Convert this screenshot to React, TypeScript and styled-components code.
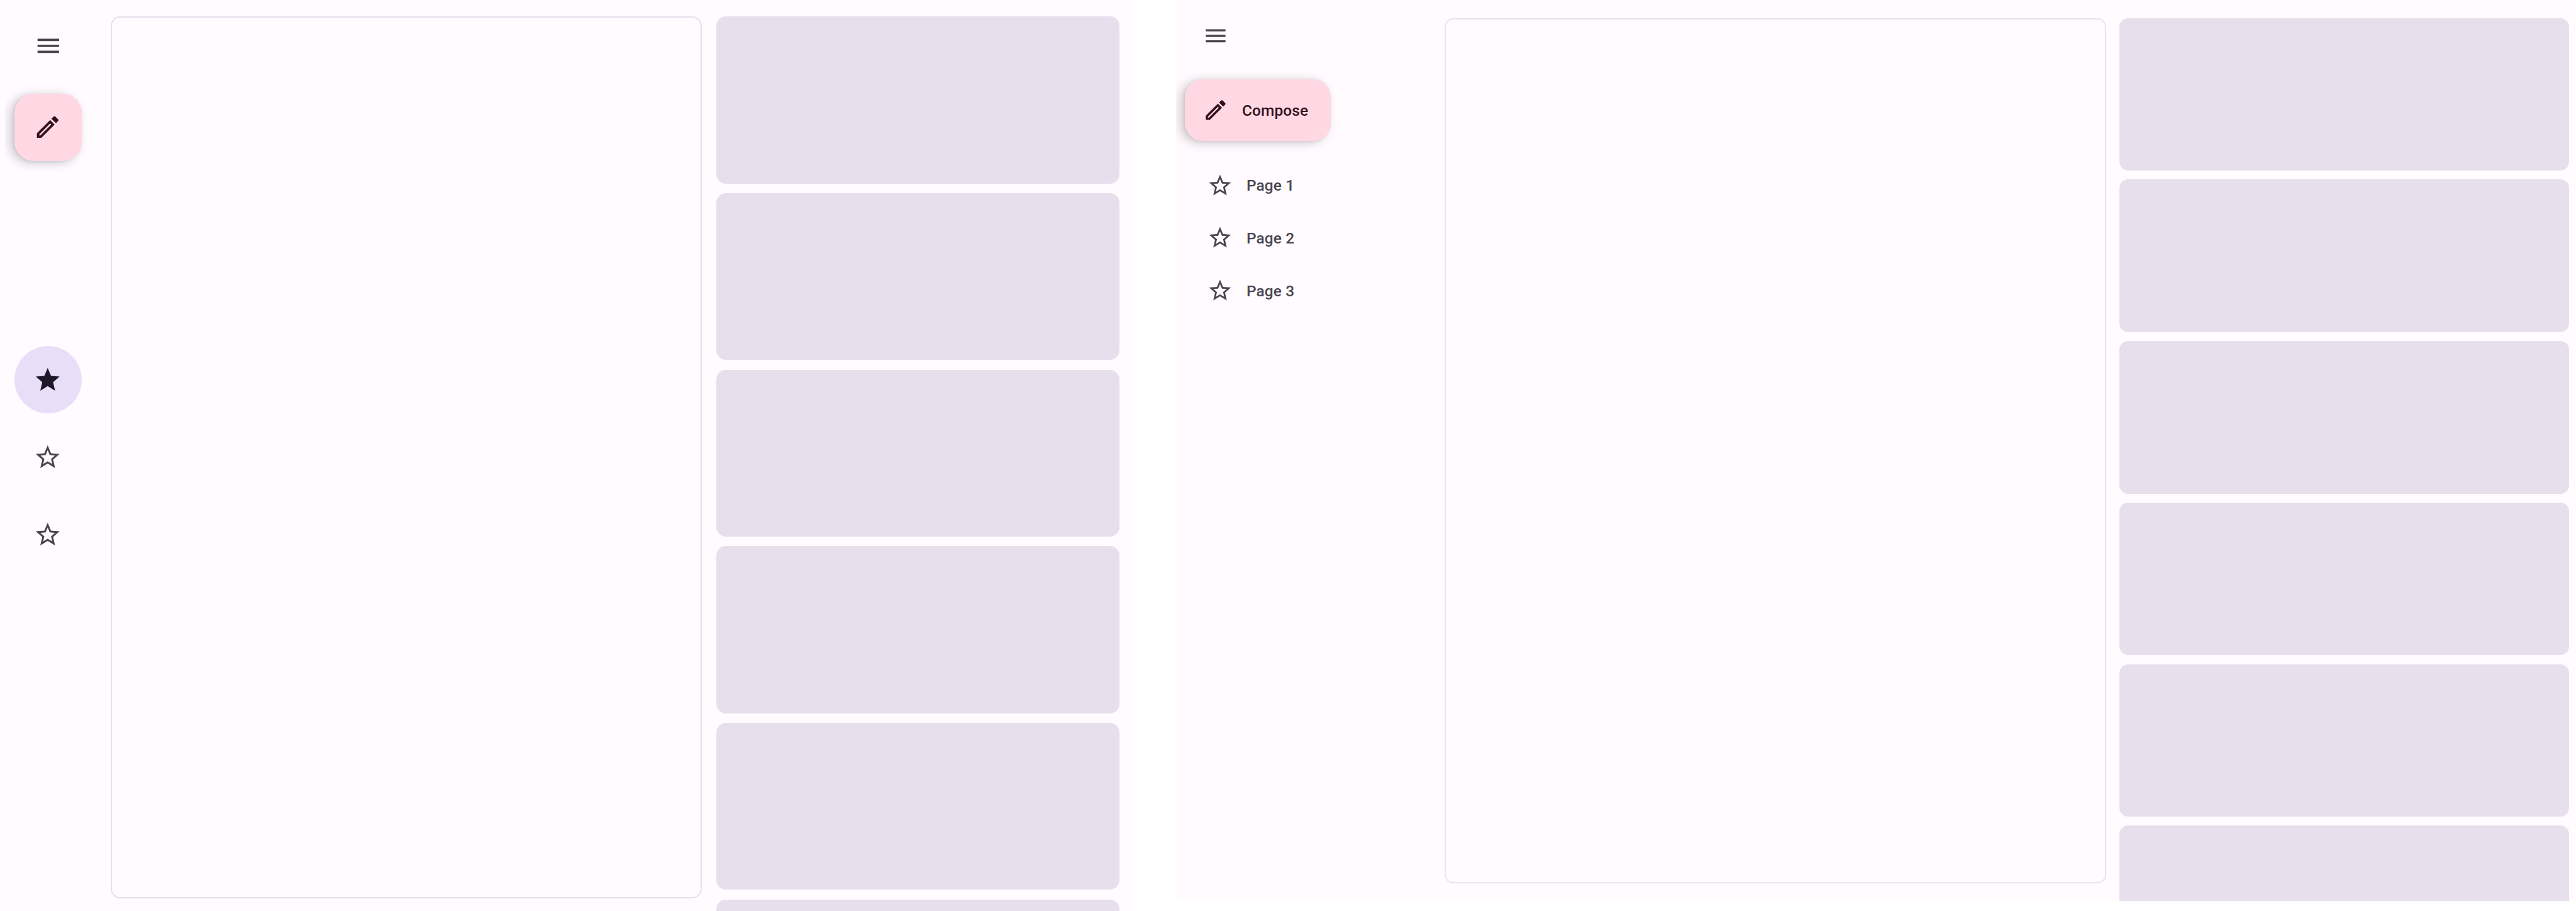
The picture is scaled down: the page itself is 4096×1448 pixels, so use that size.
import React from "react";
import styled, { createGlobalStyle, css } from "styled-components";

// Design units of the artboard (5267 wide) converted to CSS pixels.
const u = (n: number) => `${((n * 4096) / 5267).toFixed(3)}px`;

const color = {
  surface: "#fffbff",
  surfaceVariant: "#e7e0ec",
  outline: "#e7dfec",
  outlineThin: "#e9e3ef",
  secondary: "#e8def8",
  tertiary: "#ffd8e4",
  onTertiary: "#31101d",
  onSecondary: "#1d192b",
  onSurface: "#49454f",
};

const GlobalStyle = createGlobalStyle`
  *, *::before, *::after { box-sizing: border-box; }
  html, body { margin: 0; padding: 0; background: #ffffff; }
  body { font-family: Roboto, "Noto Sans", sans-serif; overflow: hidden; }
`;

const Board = styled.div`
  display: flex;
  align-items: flex-start;
  gap: ${u(86)};
  width: 4096px;
  height: 1448px;
  overflow: hidden;
`;

const Screen = styled.main<{ $width: number; $height: number }>`
  display: flex;
  flex: none;
  align-items: flex-start;
  width: ${(p) => u(p.$width)};
  height: ${(p) => u(p.$height)};
  background: ${color.surface};
  overflow: hidden;
`;

const Rail = styled.nav<{ $width: number; $top: number; $left: number }>`
  display: flex;
  flex: none;
  flex-direction: column;
  align-items: flex-start;
  width: ${(p) => u(p.$width)};
  padding: ${(p) => u(p.$top)} 0 0 ${(p) => u(p.$left)};
`;

const Icon = styled.svg<{ $size: number }>`
  display: block;
  flex: none;
  width: ${(p) => u(p.$size)};
  height: ${(p) => u(p.$size)};
  fill: currentColor;
`;

const MenuButton = styled.button<{ $indent: number }>`
  display: flex;
  margin: 0 0 0 ${(p) => u(p.$indent)};
  padding: 0;
  border: 0;
  background: none;
  color: ${color.onSurface};
`;

const Fab = styled.button<{ $compact?: boolean }>`
  display: flex;
  align-items: center;
  border: 0;
  background: ${color.tertiary};
  color: ${color.onTertiary};
  font-family: inherit;
  box-shadow: -7px 3px 17px rgba(0, 0, 0, 0.2), -1px 1px 4px rgba(0, 0, 0, 0.08);
  ${(p) =>
    p.$compact
      ? css`
          justify-content: center;
          width: ${u(137.5)};
          height: ${u(138)};
          margin: ${u(68.2)} 0 0;
          padding: 0;
          border-radius: ${u(39)};
          clip-path: inset(-40px -40px -40px -15px);
        `
      : css`
          gap: ${u(26.9)};
          width: ${u(298)};
          height: ${u(125.6)};
          margin: ${u(62.8)} 0 0;
          padding: 0 0 0 ${u(35.9)};
          border-radius: ${u(35.8)};
        `}
`;

const Label = styled.span`
  padding-top: ${u(2.4)};
  font-size: ${u(31.36)};
  font-weight: 500;
  line-height: ${u(44.8)};
  letter-spacing: ${u(0.224)};
  white-space: nowrap;
`;

const RailItems = styled.div`
  display: flex;
  flex-direction: column;
  gap: ${u(20.6)};
  margin-top: ${u(378.6)};
`;

const RailItem = styled.a<{ $active?: boolean }>`
  display: flex;
  align-items: center;
  justify-content: center;
  width: ${u(137.5)};
  height: ${u(137.6)};
  border-radius: 50%;
  background: ${(p) => (p.$active ? color.secondary : "transparent")};
  color: ${(p) => (p.$active ? color.onSecondary : color.onSurface)};
`;

const DrawerItems = styled.div`
  display: flex;
  flex-direction: column;
  margin: ${u(36.9)} 0 0 ${u(44.9)};
`;

const DrawerItem = styled.a`
  display: flex;
  align-items: center;
  gap: ${u(26.9)};
  height: ${u(107.8)};
  color: ${color.onSurface};
`;

const Pane = styled.section<{ $wide?: boolean }>`
  flex: none;
  border: 2px solid ${(p) => (p.$wide ? color.outlineThin : color.outline)};
  ${(p) =>
    p.$wide
      ? css`
          width: ${u(1352.3)};
          height: ${u(1769)};
          margin: ${u(37)} ${u(27)} 0 0;
          border-radius: ${u(18)};
        `
      : css`
          width: ${u(1208.7)};
          height: ${u(1802)};
          margin: ${u(34)} ${u(29)} 0 0;
          border-radius: ${u(19.6)};
        `}
`;

const CardList = styled.section<{ $width: number; $top: number; $gap: number }>`
  display: flex;
  flex: none;
  flex-direction: column;
  gap: ${(p) => u(p.$gap)};
  width: ${(p) => u(p.$width)};
  padding-top: ${(p) => u(p.$top)};
`;

const Card = styled.article<{ $height: number; $radius: number }>`
  flex: none;
  height: ${(p) => u(p.$height)};
  border-radius: ${(p) => u(p.$radius)};
  background: ${color.surfaceVariant};
`;

const MenuIcon = ({ size }: { size: number }) => (
  <Icon $size={size} viewBox="0 0 24 24">
    <path d="M3 18h18v-2H3v2zm0-5h18v-2H3v2zm0-7v2h18V6H3z" />
  </Icon>
);

const EditIcon = ({ size }: { size: number }) => (
  <Icon $size={size} viewBox="0 0 24 24">
    <path d="M14.06 9.02l.92.92L5.92 19H5v-.92l9.06-9.06M17.66 3c-.25 0-.51.1-.7.29l-1.83 1.83 3.75 3.75 1.83-1.83c.39-.39.39-1.02 0-1.41l-2.34-2.34c-.2-.2-.45-.29-.71-.29zm-3.6 3.19L3 17.25V21h3.75L17.81 9.94l-3.75-3.75z" />
  </Icon>
);

const StarIcon = ({ size, filled }: { size: number; filled?: boolean }) => (
  <Icon $size={size} viewBox="0 0 24 24">
    <path
      d={
        filled
          ? "M12 17.27L18.18 21l-1.64-7.03L22 9.24l-7.19-.61L12 2 9.19 8.63 2 9.24l5.46 4.73L5.82 21z"
          : "M22 9.24l-7.19-.62L12 2 9.19 8.63 2 9.24l5.46 4.73L5.82 21 12 17.27 18.18 21l-1.63-7.03L22 9.24zM12 15.4l-3.76 2.27 1-4.28-3.32-2.88 4.38-.38L12 6.1l1.71 4.04 4.38.38-3.32 2.88 1 4.28L12 15.4z"
      }
    />
  </Icon>
);

const cards = [1, 2, 3, 4, 5, 6];
const pages = ["Page 1", "Page 2", "Page 3"];

export default function App() {
  return (
    <>
      <GlobalStyle />
      <Board>
        <Screen $width={2319} $height={1862}>
          <Rail $width={226.3} $top={64.1} $left={29.2}>
            <MenuButton $indent={40.1} aria-label="Menu">
              <MenuIcon size={58.7} />
            </MenuButton>
            <Fab $compact aria-label="Compose">
              <EditIcon size={58.7} />
            </Fab>
            <RailItems>
              {pages.map((page, i) => (
                <RailItem key={page} $active={i === 0} aria-label={page}>
                  <StarIcon size={58.7} filled={i === 0} />
                </RailItem>
              ))}
            </RailItems>
          </Rail>
          <Pane />
          <CardList $width={825} $top={34} $gap={19.6}>
            {cards.map((n) => (
              <Card key={n} $height={341.3} $radius={19.6} />
            ))}
          </CardList>
        </Screen>
        <Screen $width={2862} $height={1842}>
          <Rail $width={548.7} $top={45.8} $left={18}>
            <MenuButton $indent={35.9} aria-label="Menu">
              <MenuIcon size={53.8} />
            </MenuButton>
            <Fab>
              <EditIcon size={53.8} />
              <Label>Compose</Label>
            </Fab>
            <DrawerItems>
              {pages.map((page) => (
                <DrawerItem key={page}>
                  <StarIcon size={53.8} />
                  <Label>{page}</Label>
                </DrawerItem>
              ))}
            </DrawerItems>
          </Rail>
          <Pane $wide />
          <CardList $width={920} $top={37} $gap={18.2}>
            {cards.map((n) => (
              <Card key={n} $height={311.9} $radius={18} />
            ))}
          </CardList>
        </Screen>
      </Board>
    </>
  );
}
